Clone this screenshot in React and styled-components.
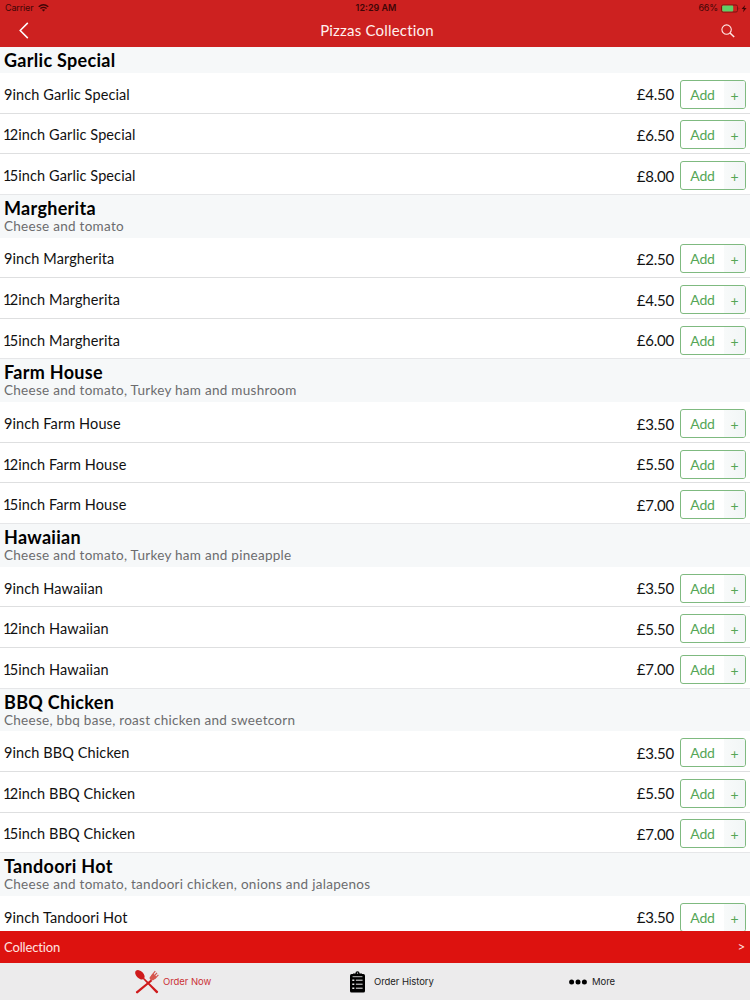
import styled, {createGlobalStyle} from 'styled-components'

const sections = [
  {
    name: 'Garlic Special',
    prices: ['4.50', '6.50', '8.00'],
  },
  {
    name: 'Margherita',
    description: 'Cheese and tomato',
    prices: ['2.50', '4.50', '6.00'],
  },
  {
    name: 'Farm House',
    description: 'Cheese and tomato, Turkey ham and mushroom',
    prices: ['3.50', '5.50', '7.00'],
  },
  {
    name: 'Hawaiian',
    description: 'Cheese and tomato, Turkey ham and pineapple',
    prices: ['3.50', '5.50', '7.00'],
  },
  {
    name: 'BBQ Chicken',
    description: 'Cheese, bbq base, roast chicken and sweetcorn',
    prices: ['3.50', '5.50', '7.00'],
  },
  {
    name: 'Tandoori Hot',
    description: 'Cheese and tomato, tandoori chicken, onions and jalapenos',
    prices: ['3.50'],
  },
]

// tens and units apart, so that the leading 1 can be kerned
const sizes = [
  ['', '9'],
  ['1', '2'],
  ['1', '5'],
]

const WifiIcon = () => (
  <svg width="11" height="8" viewBox="0 0 11 8" fill="none" stroke="#3f0606">
    <path d="M0.7 2.8Q5.5 -1.2 10.3 2.8" strokeWidth="1.4" />
    <path d="M2.4 4.6Q5.5 2 8.6 4.6" strokeWidth="1.3" />
    <path d="M5.5 7.6L3.8 5.8Q5.5 4.7 7.2 5.8Z" fill="#3f0606" stroke="none" />
  </svg>
)

const BatteryIcon = () => (
  <svg width="26" height="9" viewBox="0 0 26 9">
    <rect x="0.5" y="1" width="16" height="7" rx="1.5" fill="none" stroke="#7d1210" />
    <rect x="1.2" y="1.6" width="11" height="5.8" rx="0.8" fill="#5fd068" />
    <path d="M17.7 3.2Q19 4.5 17.7 5.8Z" fill="#7d1210" />
    <path d="M24.2 1L20.6 5H22.8L22 8.2L25.6 4H23.3Z" fill="#3f0606" />
  </svg>
)

const BackIcon = () => (
  <svg width="10" height="17" viewBox="0 0 10 17" fill="none" stroke="#fff">
    <path d="M8.8 0.9L1.2 8.5L8.8 16.1" strokeWidth="1.5" />
  </svg>
)

const SearchIcon = () => (
  <svg width="14" height="14" viewBox="0 0 14 14" fill="none" stroke="#ffe9e6">
    <circle cx="5.6" cy="5.6" r="4.7" strokeWidth="1.1" />
    <path d="M9 9L13.2 13" strokeWidth="1.5" />
  </svg>
)

const CutleryIcon = () => (
  <svg width="24" height="24" viewBox="0 0 24 24" fill="#cf1a1c">
    <ellipse cx="4.9" cy="4.8" rx="5.6" ry="3.6" transform="rotate(45 4.9 4.8)" />
    <path d="M7.5 8.5L8.6 7.4L23.2 21.6Q23.2 23.4 21.4 23.2Z" />
    <path d="M16 9.6L17.3 10.9L2.4 23.4Q0.6 23.2 0.8 21.7Z" />
    <g fill="#d5574f">
      <path d="M14.8 7L18.4 3.6L21.6 7L19.4 9.4Q17.3 11 15.4 9.7Q13.9 8.4 14.8 7Z" />
      <path
        d="M16.4 5.8L20.3 1.2M18.3 7L22 2.8M19.8 8.6L23.4 4.8"
        fill="none"
        stroke="#d5574f"
        strokeWidth="1.2"
      />
    </g>
  </svg>
)

const ClipboardIcon = () => (
  <svg width="15" height="22" viewBox="0 0 15 22">
    <rect x="0" y="3" width="15" height="18.5" rx="1.6" fill="#000" />
    <path d="M3 5.2V2.4H5.4Q5.4 0.2 7.5 0.2T9.6 2.4H12V5.2Z" fill="#000" />
    <path d="M2.6 5.7H12.4" stroke="#ecebec" strokeWidth="0.8" />
    <circle cx="7.5" cy="2.1" r="0.7" fill="#ecebec" />
    <path
      d="M2.3 9.2H4.3M2.3 13.2H4.3M2.3 17.2H4.3"
      stroke="#ecebec"
      strokeWidth="1.5"
    />
    <path
      d="M5.9 9.2H12.6M5.9 13.2H12.6M5.9 17.2H12.6"
      stroke="#ecebec"
      strokeWidth="1"
    />
  </svg>
)

const MoreIcon = () => (
  <svg width="18" height="6" viewBox="0 0 18 6">
    <circle cx="2.6" cy="3" r="2.5" />
    <circle cx="9" cy="3" r="2.5" />
    <circle cx="15.4" cy="3" r="2.5" />
  </svg>
)

const App = () => (
  <>
    <GlobalStyle />
    <Screen>
      <Header>
        <StatusBar>
          <StatusSide>
            Carrier
            <WifiIcon />
          </StatusSide>
          <Clock>12:29 AM</Clock>
          <StatusSide $end>
            66%
            <BatteryIcon />
          </StatusSide>
        </StatusBar>
        <NavBar>
          <NavButton type="button" aria-label="Back">
            <BackIcon />
          </NavButton>
          <Title>Pizzas Collection</Title>
          <NavButton type="button" aria-label="Search" $end>
            <SearchIcon />
          </NavButton>
        </NavBar>
      </Header>
      <Menu>
        {sections.map(({name, description, prices}) => (
          <section key={name}>
            <SectionHeader $short={!description}>
              <SectionName>{name}</SectionName>
              {description && <Description>{description}</Description>}
            </SectionHeader>
            {prices.map((price, index) => {
              const [tens, units] = sizes[index]
              return (
                <Row key={units} $last={index === 2}>
                  <ItemName>
                    {tens && <Tens>{tens}</Tens>}
                    {units}inch {name}
                  </ItemName>
                  <Price>£{price}</Price>
                  <AddButton type="button">
                    <AddLabel>Add</AddLabel>
                    <Plus>+</Plus>
                  </AddButton>
                </Row>
              )
            })}
          </section>
        ))}
      </Menu>
      <CollectionBar>
        <span>Collection</span>
        <Arrow>&gt;</Arrow>
      </CollectionBar>
      <TabBar>
        <Tab $active $gap={4}>
          <CutleryIcon />
          Order Now
        </Tab>
        <Tab $gap={9}>
          <ClipboardIcon />
          Order History
        </Tab>
        <Tab $gap={5}>
          <MoreIcon />
          More
        </Tab>
      </TabBar>
    </Screen>
  </>
)
export default App

const GlobalStyle = createGlobalStyle`
  * {
    box-sizing: border-box;
  }
  body {
    margin: 0;
  }
  button {
    border: none;
    padding: 0;
    background: none;
    font-family: inherit;
    cursor: pointer;
  }
  svg {
    display: block;
    flex-shrink: 0;
  }
`
const Screen = styled.div`
  display: flex;
  flex-direction: column;
  width: 750px;
  height: 1000px;
  overflow: hidden;
  background-color: #fff;
  color: #111;
  font-family: Lato, sans-serif;
`
const Header = styled.header`
  height: 47px;
  flex-shrink: 0;
  background-color: #cd2120;
`
const StatusBar = styled.div`
  display: grid;
  grid-template-columns: 1fr auto 1fr;
  align-items: center;
  height: 16px;
  padding: 0 3px 0 5px;
  color: #3f0606;
  font-family: Inter, sans-serif;
  font-size: 9px;
  letter-spacing: -0.15px;
  line-height: 16px;
`
const StatusSide = styled.div`
  display: flex;
  align-items: center;
  justify-content: ${props => (props.$end ? 'flex-end' : 'flex-start')};
  gap: ${props => (props.$end ? '3px' : '5px')};
`
const Clock = styled.div`
  font-weight: 600;
  letter-spacing: 0;
`
const NavBar = styled.nav`
  display: grid;
  grid-template-columns: 1fr auto 1fr;
  align-items: center;
  height: 29px;
  padding: 0 15px 0 19px;
`
const NavButton = styled.button`
  justify-self: ${props => (props.$end ? 'end' : 'start')};
`
const Title = styled.h1`
  margin: 0;
  padding-bottom: 2px;
  color: #fff0ed;
  font-size: 15px;
  font-weight: 400;
  letter-spacing: 0.2px;
`
const Menu = styled.main`
  flex: 1;
  min-height: 0;
  overflow: hidden;
`
const SectionHeader = styled.div`
  height: ${props => (props.$short ? '26.1px' : '42.8px')};
  padding: ${props => (props.$short ? '2.5px' : '3px')} 4px 0;
  background-color: #f6f8f9;
`
const SectionName = styled.h2`
  margin: 0;
  color: #000;
  font-size: 18px;
  font-weight: 700;
  letter-spacing: 0.3px;
  line-height: 21px;
`
const Description = styled.p`
  margin: 0;
  margin-top: -3px;
  color: #6c6c6e;
  font-size: 13.5px;
  letter-spacing: 0.28px;
  line-height: 20px;
`
const Row = styled.div`
  display: flex;
  align-items: center;
  height: 40.6px;
  padding: 3px 4px 0;
  border-bottom: 1px solid ${props => (props.$last ? '#e6e7e9' : '#dedfe0')};
`
const ItemName = styled.span`
  flex: 1;
  font-size: 14.5px;
  letter-spacing: 0.1px;
`
const Tens = styled.span`
  margin-left: -1px;
  letter-spacing: -1.7px;
`
const Price = styled.span`
  margin-right: 6px;
  font-size: 15px;
  letter-spacing: -0.2px;
`
const AddButton = styled.button`
  display: flex;
  width: 66px;
  height: 29px;
  border: 1px solid #7fba80;
  border-radius: 3px;
  overflow: hidden;
  color: #55a656;
`
const AddLabel = styled.span`
  flex: 1;
  font-size: 14px;
  letter-spacing: -0.2px;
  line-height: 28px;
`
const Plus = styled.span`
  width: 21px;
  background: linear-gradient(to right, #f8fafa, #f2f6f6);
  font-size: 14px;
  line-height: 29px;
`
const CollectionBar = styled.div`
  display: flex;
  align-items: center;
  justify-content: space-between;
  flex-shrink: 0;
  height: 32px;
  padding: 0 5px 0 4px;
  background-color: #dd120f;
  color: #ffe4e0;
  font-size: 13px;
  letter-spacing: -0.15px;
`
const Arrow = styled.span`
  font-family: Inter, sans-serif;
  font-size: 11px;
`
const TabBar = styled.footer`
  display: grid;
  grid-template-columns: 135px 215px 219px 1fr;
  align-items: center;
  flex-shrink: 0;
  height: 37px;
  background-color: #ecebec;
  font-family: Inter, sans-serif;
  font-size: 9.5px;
  letter-spacing: -0.05px;

  &::before {
    content: '';
  }
`
const Tab = styled.div`
  display: flex;
  align-items: center;
  gap: ${props => props.$gap}px;
  color: ${props => (props.$active ? '#cb3236' : '#1c1c1c')};
`
